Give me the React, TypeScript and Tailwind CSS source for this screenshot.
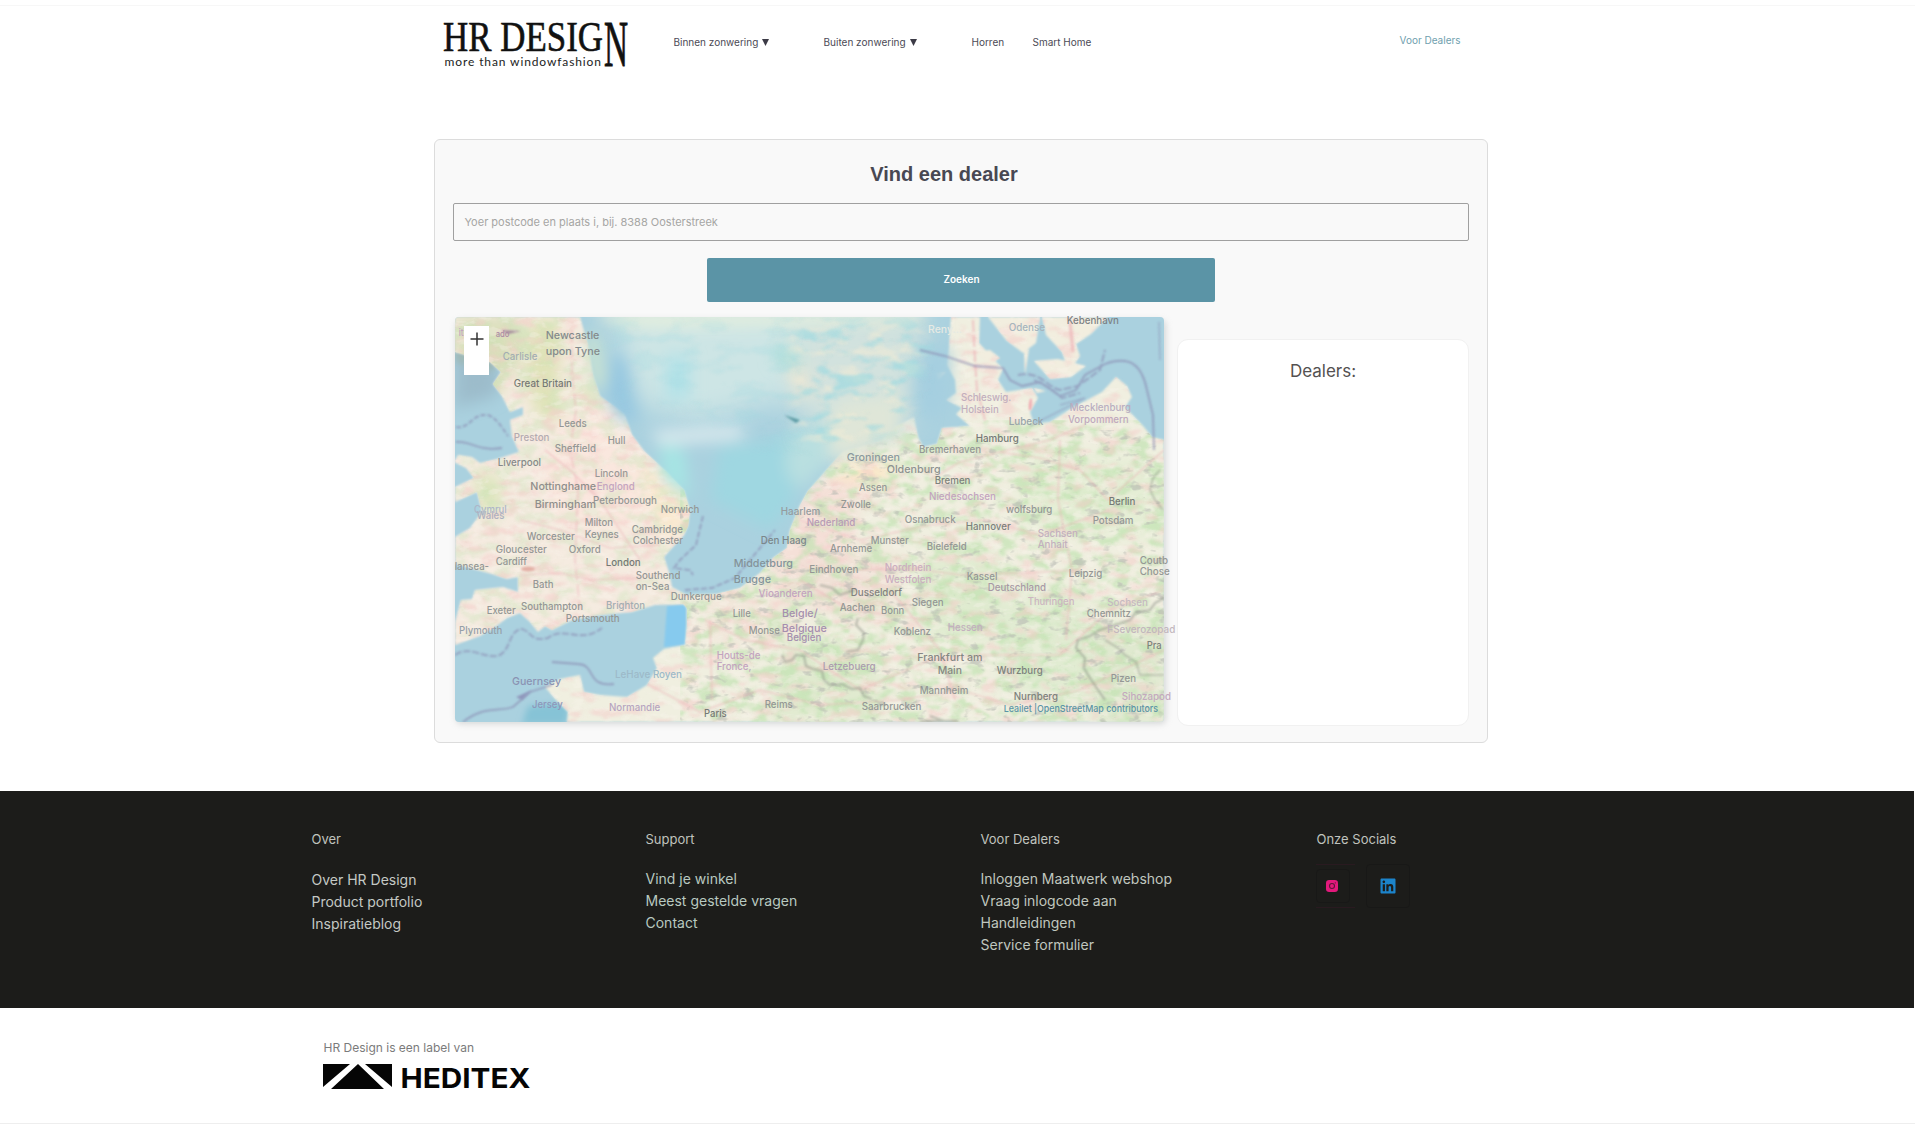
import React from "react";
import { RiLinkedinBoxFill } from "react-icons/ri";

type Label = [string, number, number, number, string?, number?];

const DARK = "#757975";
const PINK = "#c3a4bf";
const PALE = "#a3adb2";
const MAUVE = "#a58fae";

// text, x, baseline, width, colour, size
const labels: Label[] = [
  ["iti", 458.7, 335.7, 7, PINK],
  ["ado", 495.7, 336.7, 13.7, "#ab8ba5", 9],
  ["Newcastle", 545.7, 339, 53.7, "#848a8c", 11],
  ["upon Tyne", 545.7, 355, 54.3, "#848a8c", 11],
  ["Carlisle", 502.7, 360, 34.7, PALE],
  ["Great Britain", 513.7, 387, 58.3, DARK],
  ["Leeds", 558.7, 427, 28],
  ["Preston", 513.7, 441, 35.7, "#b3abb0"],
  ["Hull", 607.7, 444, 17.7],
  ["Sheffield", 554.7, 452, 41.3],
  ["Liverpool", 497.7, 466, 43.3, "#858989"],
  ["Lincoln", 594.7, 477, 33.3, "#9a9896"],
  ["Nottinghame", 530.3, 490, 65.7, "#8f8e8b", 11],
  ["Englond", 596.7, 490, 38, PINK],
  ["Birmingham", 534.7, 508, 61.3, "#8f8e8b", 11],
  ["Peterborough", 593, 504, 64],
  ["Norwich", 660.7, 513, 38.7],
  ["Cymrul", 474, 513, 32.7, "#adb6c8"],
  ["Wales", 476.7, 519.3, 27.7, "#adb0c0"],
  ["Haarlem", 780.8, 515.3, 39.4, "#959c9f"],
  ["Milton", 584.7, 526, 28.3],
  ["Keynes", 584.7, 538, 34],
  ["Cambridge", 631.7, 533, 51.3],
  ["Colchester", 632.7, 544, 50.3],
  ["Worcester", 526.7, 540, 48],
  ["Gloucester", 495.7, 553, 51],
  ["Oxford", 568.7, 553, 32],
  ["Cardiff", 495.7, 565, 31.3],
  ["London", 605.7, 566.3, 35, DARK],
  ["lansea-", 454.7, 570, 34.3],
  ["Bath", 532.7, 588, 20.7],
  ["Southend", 635.7, 579, 44.7],
  ["on-Sea", 635.7, 590, 33.7],
  ["Dunkerque", 670.7, 600, 51],
  ["Den Haag", 760.7, 544, 46, "#7b878b"],
  ["Middetburg", 733.7, 567.3, 59.3, "#84939a", 11],
  ["Brugge", 733.7, 583, 37.3, "#84939a", 11],
  ["Exeter", 486.7, 614, 29],
  ["Southampton", 521, 610, 62],
  ["Brighton", 606, 609, 39, PALE],
  ["Portsmouth", 565.7, 622, 54],
  ["Plymouth", 459, 634, 43.3, "#959fa8"],
  ["Lille", 732.7, 617, 18],
  ["Monse", 748.7, 634, 31.3],
  ["Vioanderen", 758.6, 597, 54, PINK],
  ["Belgle/", 782, 617, 35.6, MAUVE, 11],
  ["Belgique", 781.8, 632, 45, MAUVE, 11],
  ["Belgien", 786.8, 641, 34.5, MAUVE],
  ["Houts-de", 716.7, 659, 43.7, PINK],
  ["Fronce,", 716.7, 670, 34.7, PINK],
  ["Guernsey", 512, 685, 49, "#8a93b3", 11],
  ["LeHave Royen", 615, 678, 67, "#9dbac9"],
  ["Jersey", 532, 708.3, 30.7, "#8f97ba"],
  ["Normandie", 609, 711, 51.3, "#b7a5c0"],
  ["Paris", 704, 717, 22.7, DARK],
  ["Reims", 764.7, 708, 28],
  ["Reny...", 928, 332.7, 34, "#e6eae4"],
  ["Odense", 1008.7, 331, 36.3, "#a6b4bd"],
  ["Kebenhavn", 1066.7, 324, 52.3, "#7c8183"],
  ["Schleswig.", 961, 401, 50.3, "#c2aebd"],
  ["Holstein", 961, 413, 37.7, "#c2aebd"],
  ["Mecklenburg", 1069.7, 411, 61.3, "#b9adc0"],
  ["Vorpommern", 1068, 423, 60.7, "#c0a9be"],
  ["Lubeck", 1008.7, 425, 34.7, "#98a4a9"],
  ["Hamburg", 975.7, 442, 43, DARK],
  ["Bremerhaven", 919, 453, 62],
  ["Groningen", 846.7, 461, 53.3, "#8c999e", 11],
  ["Oldenburg", 886.7, 473, 54, "#8d9290", 11],
  ["Bremen", 934.7, 484, 35.7, "#7d817c"],
  ["Assen", 859, 491, 28.3],
  ["Niedesochsen", 929, 500, 67, PINK],
  ["Zwolle", 840.7, 508, 30.3],
  ["wolfsburg", 1006, 513, 46.3],
  ["Berlin", 1108.7, 505, 26.7, DARK],
  ["Osnabruck", 904.7, 523, 51],
  ["Potsdam", 1092.7, 524, 40.7],
  ["Nederland", 806.7, 526, 48.7, "#b79cb6"],
  ["Hannover", 965.7, 530, 45, "#7d817c"],
  ["Munster", 870.7, 544, 38],
  ["Arnheme", 830, 552, 42.3],
  ["Bielefeld", 926.7, 550, 40],
  ["Sachsen", 1037.7, 537, 40.3, "#c3b0be"],
  ["Anhait", 1037.7, 548, 30, "#c3b0be"],
  ["Coutb", 1139.7, 564, 28.3],
  ["Chose", 1139.7, 575, 30],
  ["Eindhoven", 809.3, 573, 49],
  ["Nordrhein", 884.7, 571, 46.7, "#cbaebf"],
  ["Westfolen", 884.7, 583, 46.7, "#cbaebf"],
  ["Kassel", 966.7, 580, 30.7],
  ["Leipzig", 1068.7, 577, 33.7],
  ["Deutschland", 987.7, 591, 58.3, "#a899a5"],
  ["Dusseldorf", 850.7, 596, 51.3, "#82827f"],
  ["Siegen", 911.7, 606, 32],
  ["Thuringen", 1027.7, 605, 46.7, "#ccb5c0"],
  ["Aachen", 839.7, 611, 35.3],
  ["Bonn", 881, 614, 23.3],
  ["Sochsen", 1107.3, 606, 40.7, "#c6b9c0"],
  ["Chemnitz", 1086.7, 617, 44.3],
  ["FSeverozopad", 1107.3, 633, 68, "#c2b7bd"],
  ["Koblenz", 893.7, 635, 37.3],
  ["Hessen", 947.7, 631, 35, "#c3b0be"],
  ["Pra", 1146.7, 649, 15, "#7d817c"],
  ["Frankfurt am", 917.3, 661, 65.3, "#868783", 11],
  ["Main", 937.7, 674, 24.3, "#868783", 11],
  ["Letzebuerg", 822.7, 670, 53, "#ac9cae"],
  ["Wurzburg", 996.7, 674, 46, "#7d817c"],
  ["Pizen", 1110.7, 682, 25.3],
  ["Mannheim", 919.7, 694, 48.7],
  ["Nurnberg", 1013.7, 700, 44.3, "#7d817c"],
  ["Sihozapod", 1121.7, 700, 49.3, "#c3a9be"],
  ["Saarbrucken", 861.7, 710, 59.7],
];

const BRITAIN =
  "M455 317H580L588 345L593 375L600 396L618 409L625 415L632 435L645 452L668 473L684 490L690 510L688 526L684 535L672 548L664 557L669 572L672 587L690 597L686 604L655 605L632 612L600 615L572 620L552 630L545 626L538 632L530 622L520 613L507 618L495 627L480 636L455 645V622L461 600L472 599L475 590L503 587L518 592V577L507 579L492 574L455 564V537L470 528L482 512L477 492L455 502V487L474 478L466 468L454 462L458 455L472 457L480 463L497 459L519 452L512 436L510 420L523 415L523 407L510 412L502 396L493 384L501 372L490 362L455 352Z";
const CONTINENT =
  "M567 722L568 712L556 700L545 687L560 679L580 675L584 692L600 695L627 697L647 685L657 668L653 658L664 649L685 645L687 625V608L670 590L683 595L717 594L740 588L760 573L773 558L787 548L790 530L800 505L808 491L829 467L843 451L881 441L895 427L914 417L918 437L923 447L937 444L942 428L970 426L956 414L962 408L946 400L956 393L955 380L947 365L949 347L951 317H980L979 343L1003 369L998 380L1006 392L1032 388L1038 398L1030 412L1034 424L1050 422L1069 410L1087 400L1102 392L1116 377L1127 386L1132 397L1125 407L1144 427L1152 437L1164 440V722Z";
const ISLANDS =
  "M988 317H1040L1036 343L1023 353L1006 340ZM1042 317H1108L1091 334L1076 344L1080 356L1069 372L1062 352L1046 335ZM1034 361L1058 359L1086 366L1071 377L1050 379ZM975 352L990 350L1000 358L990 364ZM1024 352L1029 349L1025 375ZM1034 388L1046 391L1037 393ZM935 373L946 372L938 380Z";

function MapCanvas() {
  return (
    <svg className="absolute inset-0 size-full overflow-visible" viewBox="455 317 709 405">
      <defs>
        <clipPath id="frame">
          <rect x="455" y="317" width="709" height="405" rx="4" />
        </clipPath>
        <clipPath id="land">
          <path d={BRITAIN} />
          <path d={CONTINENT} />
          <path d={ISLANDS} />
        </clipPath>
        <filter id="soft1" x="-20%" y="-20%" width="140%" height="140%">
          <feGaussianBlur stdDeviation="1.3" />
        </filter>
        <filter id="soft3" x="-20%" y="-20%" width="140%" height="140%">
          <feGaussianBlur stdDeviation="3" />
        </filter>
        <filter id="soft8" x="-50%" y="-50%" width="200%" height="200%">
          <feGaussianBlur stdDeviation="8" />
        </filter>
        <filter id="soft14" x="-60%" y="-60%" width="220%" height="220%">
          <feGaussianBlur stdDeviation="14" />
        </filter>
        <filter id="greens" x="0" y="0" width="100%" height="100%" colorInterpolationFilters="sRGB">
          <feTurbulence type="fractalNoise" baseFrequency="0.06 0.09" numOctaves="3" seed="7" />
          <feColorMatrix values="0 0 0 0 0.76  0 0 0 0 0.89  0 0 0 0 0.70  6 0 0 0 -2.8" />
          <feGaussianBlur stdDeviation="0.8" />
        </filter>
        <filter id="pinks" x="0" y="0" width="100%" height="100%" colorInterpolationFilters="sRGB">
          <feTurbulence type="fractalNoise" baseFrequency="0.05 0.11" numOctaves="3" seed="21" />
          <feColorMatrix values="0 0 0 0 0.96  0 0 0 0 0.80  0 0 0 0 0.79  0 6 0 0 -3.2" />
          <feGaussianBlur stdDeviation="0.8" />
        </filter>
        <filter id="whites" x="0" y="0" width="100%" height="100%" colorInterpolationFilters="sRGB">
          <feTurbulence type="fractalNoise" baseFrequency="0.07 0.14" numOctaves="3" seed="33" />
          <feColorMatrix values="0 0 0 0 0.98  0 0 0 0 0.96  0 0 0 0 0.93  0 6 0 0 -3.1" />
          <feGaussianBlur stdDeviation="0.6" />
        </filter>
        <filter id="greys" x="0" y="0" width="100%" height="100%" colorInterpolationFilters="sRGB">
          <feTurbulence type="fractalNoise" baseFrequency="0.07 0.12" numOctaves="3" seed="4" />
          <feColorMatrix values="0 0 0 0 0.72  0 0 0 0 0.73  0 0 0 0 0.70  0 0 6 0 -3.7" />
          <feGaussianBlur stdDeviation="0.6" />
        </filter>
        <filter id="aquas" x="0" y="0" width="100%" height="100%" colorInterpolationFilters="sRGB">
          <feTurbulence type="fractalNoise" baseFrequency="0.03 0.07" numOctaves="4" seed="11" />
          <feColorMatrix values="0 0 0 0 0.60  0 0 0 0 0.85  0 0 0 0 0.88  0 6 0 0 -3" />
          <feGaussianBlur stdDeviation="1.2" />
        </filter>
        <filter id="creams" x="0" y="0" width="100%" height="100%" colorInterpolationFilters="sRGB">
          <feTurbulence type="fractalNoise" baseFrequency="0.03 0.07" numOctaves="4" seed="18" />
          <feColorMatrix values="0 0 0 0 0.94  0 0 0 0 0.92  0 0 0 0 0.84  6 0 0 0 -3.1" />
          <feGaussianBlur stdDeviation="1.2" />
        </filter>
        <mask id="seaMask">
          <path d="M600 317H925L935 345L905 425L845 450L790 450L700 415L630 400Z" fill="#fff" filter="url(#soft8)" />
        </mask>
        <mask id="eastSeaMask">
          <path d="M790 325H920L930 345L900 425L845 450L800 440Z" fill="#fff" filter="url(#soft8)" />
        </mask>
      </defs>

      <rect x="456" y="320" width="710" height="404" rx="5" fill="#b9bdbd" opacity="0.55" filter="url(#soft3)" />
      <g clipPath="url(#frame)">
        <rect x="455" y="317" width="709" height="405" fill="#aad1df" />

        <path d="M455 350L492 360L502 384L493 398L470 403L455 410Z" fill="#9cbccb" filter="url(#soft8)" />
        <path d="M455 338L490 345L502 362L490 372L455 362Z" fill="#9fb9b8" filter="url(#soft3)" />
        <path d="M528 706L570 702L566 724H522Z" fill="#86c3d6" filter="url(#soft3)" />
        <path d="M667 606L686 604V645L664 647Z" fill="#86caee" filter="url(#soft1)" />

        <g filter="url(#soft1)">
          <path d={BRITAIN} fill="#f5ebe0" />
          <path d={CONTINENT} fill="#f0efe0" />
          <path d={ISLANDS} fill="#f2eedf" />
        </g>
        <g clipPath="url(#land)">
          <g filter="url(#soft8)">
            <path d="M455 317H520L525 350L495 400H455Z" fill="#dadfbb" />
            <path d="M530 320H562L558 400L535 410L525 380Z" fill="#dfe3b8" />
            <path d="M580 385L608 395L606 402L575 400Z" fill="#d7e2b4" />
            <path d="M533 402L562 400L560 420L540 418Z" fill="#dbe3b4" />
            <path d="M474 470L502 478L500 510L480 518Z" fill="#dbe5bb" />
            <path d="M560 420L600 410L640 470L650 530L560 520L540 480Z" fill="#fae7de" />
            <path d="M640 460L690 490V520L665 545L650 500Z" fill="#fae9cf" />
            <path d="M830 460L895 460L885 485L835 487Z" fill="#fbe8c8" />
            <path d="M800 480L860 480L850 560L790 590L770 570Z" fill="#f5e0d8" />
            <path d="M700 590L800 580L790 650L700 640Z" fill="#f2e8db" />
            <path d="M800 560L900 555L890 620L800 610Z" fill="#f0e1d6" />
            <path d="M920 560L1000 555V640L930 640Z" fill="#dfebcf" />
            <path d="M1000 600L1080 590L1100 700L1000 690Z" fill="#e1ecd2" />
            <path d="M1010 450L1164 460V540L1030 530Z" fill="#e5eed5" />
            <path d="M780 640L880 640V722H770Z" fill="#e0eacf" />
            <path d="M1085 625L1164 625V722H1090Z" fill="#dfe9cf" />
          </g>
          <rect x="680" y="420" width="484" height="302" filter="url(#greens)" opacity="0.7" />
          <rect x="455" y="317" width="240" height="320" filter="url(#greens)" opacity="0.3" />
          <rect x="455" y="317" width="709" height="405" filter="url(#pinks)" opacity="0.5" />
          <rect x="455" y="317" width="709" height="405" filter="url(#whites)" opacity="0.3" />
          <rect x="680" y="430" width="484" height="292" filter="url(#greys)" opacity="0.6" />
          <g fill="none" stroke="#ecaeb4" strokeWidth="1.2" opacity="0.65" filter="url(#soft1)">
            <path d="M572 330V375L576 410L570 450L578 490L575 560L580 610" strokeDasharray="12 4" />
            <path d="M520 575L560 573L590 580L640 578M545 450L570 470L600 500L640 560M520 520L560 530L610 548L660 545" />
            <path d="M973 320L975 360L977 390L985 420" strokeDasharray="12 3" strokeWidth="2" />
            <path d="M1070 322L1073 352" strokeWidth="3" />
            <path d="M930 480L960 462L1000 452L1050 440L1085 425M998 452L1040 458L1080 470L1108 500L1164 450" />
            <path d="M800 520L860 540L930 525L985 520L1040 535L1110 510M850 570L910 568L960 575L1040 572L1080 570" />
            <path d="M705 620L745 640L800 650L860 690L930 660L980 655L1060 655L1110 610L1164 590" />
            <path d="M640 680L700 712L760 690L820 705L900 700L960 690L1010 705L1080 690L1164 650" />
            <path d="M710 620L712 700M890 590L940 650L955 700M1060 440L1058 500L1072 570L1066 640M800 580L850 610L930 620" />
          </g>
          <g fill="none" stroke="#8e9488" strokeWidth="2.2" opacity="0.55" filter="url(#soft1)">
            <path d="M782 655L785 662L792 660L796 655L804 656L806 666L813 669L822 671L824 680L830 685L842 684L852 689L860 688L864 696L872 699" />
            <path d="M858 618L856 625L864 633L863 640L858 650L846 652" />
            <path d="M1164 598L1155 603L1150 610L1136 612L1130 620L1112 626L1100 630L1090 636L1078 640L1076 648L1085 658L1084 668L1090 678L1098 690L1105 700" />
            <path d="M920 721H958M930 716L944 721" />
            <path d="M1163 510L1155 500L1150 490L1153 478L1160 470M1105 640L1118 648L1125 655L1136 662L1140 675H1164" strokeWidth="1.6" />
            <path d="M820 585L832 588L840 595L855 590" />
          </g>
        </g>

        {/* haze across the North Sea */}
        <g filter="url(#soft14)">
          <path d="M630 310H850L860 360L800 395L700 420L640 405L618 350Z" fill="#cde5e5" />
          <path d="M790 317H925L910 425L840 450L795 410Z" fill="#d2e2de" />
        </g>
        <g filter="url(#soft8)">
          <path d="M590 312H925L920 323L620 327Z" fill="#ebf2de" />
          <path d="M585 335L598 335L606 380L596 395Z" fill="#cfe6cf" />
          <path d="M665 355H690V400H665Z" fill="#b3e2e8" />
          <path d="M660 440L684 450L690 500L664 478Z" fill="#a6e6e4" />
          <path d="M612 350L626 360L632 400L640 420L620 420L606 390Z" fill="#95c7e1" />
          <path d="M720 445L790 440L795 500L770 530L710 500Z" fill="#9fd7e1" />
          <path d="M650 432L740 426L745 438L660 444Z" fill="#e0ecef" />
          <path d="M787 365H806L815 395L797 398Z" fill="#e6e5d6" />
          <path d="M775 345L802 355L795 368L775 362Z" fill="#a9dfda" />
          <path d="M840 400L900 395L900 440L835 460L805 465L820 430Z" fill="#dfe6d8" />
          <path d="M790 430L830 420L830 460L800 490L785 470Z" fill="#b9dfe0" />
          <path d="M930 345L950 350L947 410L920 425L915 380Z" fill="#a5cfe0" />
        </g>
        <g mask="url(#seaMask)">
          <rect x="583" y="317" width="352" height="150" filter="url(#aquas)" opacity="0.2" />
        </g>
        <g mask="url(#eastSeaMask)">
          <rect x="760" y="317" width="180" height="150" filter="url(#creams)" opacity="0.6" />
          <rect x="760" y="317" width="180" height="150" filter="url(#aquas)" opacity="0.55" />
        </g>

        {/* maritime borders */}
        <g fill="none" stroke="#8b8cb2" strokeWidth="1.8" opacity="0.72" filter="url(#soft1)">
          <path d="M456 427C468 430 472 415 484 415C492 413 500 424 508 436" strokeDasharray="5 2" />
          <path d="M456 442C470 440 478 452 502 448" />
          <path d="M455 655C470 645 482 658 498 656C512 650 508 630 522 629C532 632 530 642 548 638C565 625 580 645 602 628" strokeDasharray="7 2" />
          <path d="M552 662L578 664C596 664 586 688 614 684" />
          <path d="M463 722C485 705 500 712 513 707L530 692L552 685" />
          <path d="M703 516L696 545L680 560L674 568L690 570L693 575M685 590L712 588L735 578L775 530" strokeDasharray="6 2" />
          <path d="M920 350L945 356L975 366L1003 368L1010 380L1022 386L1040 382L1060 396L1076 390L1085 375L1105 364C1130 355 1142 365 1147 390L1153 415L1154 450" />
          <path d="M1018 375C1040 370 1048 388 1060 390L1078 386L1100 370L1105 350M1034 380L1050 388L1062 398L1080 393" strokeDasharray="8 2" />
          <path d="M1159 322L1160 360M1060 405L1085 398L1030 426" strokeWidth="1" />
        </g>
        <g filter="url(#soft1)">
          <path d="M784 415L800 420L796 423Z" fill="#5f9ca5" />
          <path d="M516 697L532 690L522 700Z" fill="#8f96bb" />
          <ellipse cx="528" cy="569" rx="7" ry="2.5" fill="#e3b0a6" />
          <path d="M1030 405L1031 399L1030 410Z" fill="#f0a1ab" stroke="#f0a1ab" strokeWidth="2" />
          <path d="M501 330L521 331L508 334Z" fill="#a58b9c" />
        </g>
      </g>

      <g fontFamily="Inter, sans-serif" fontWeight="500">
        {labels.map(([text, x, y, width, color = "#949795", size = 10]) => (
          <text key={text + x} x={x} y={y} textLength={width} lengthAdjust="spacingAndGlyphs" fill={color} fontSize={size}>
            {text}
          </text>
        ))}
        <text x="1003.7" y="712" textLength="154.3" lengthAdjust="spacingAndGlyphs" fill="#5b94a6" fontSize="9.5">
          Leailet |OpenStreetMap contributors
        </text>
      </g>
    </svg>
  );
}

function BrandLogo() {
  return (
    <svg className="h-[50px] w-[188px] overflow-visible" viewBox="441 19 188 50" fontFamily="'Liberation Serif', serif" fill="#111">
      <text x="443" y="50.5" fontSize="43" textLength="160" lengthAdjust="spacingAndGlyphs" stroke="#111" strokeWidth="0.6">
        HR DESIG
      </text>
      <text x="604" y="65.7" fontSize="66" textLength="24" lengthAdjust="spacingAndGlyphs" stroke="#111" strokeWidth="1">
        N
      </text>
      <text x="444.5" y="65.5" fontSize="12" fontFamily="Lato, sans-serif" textLength="156.5" lengthAdjust="spacing" fill="#222">
        more than windowfashion
      </text>
    </svg>
  );
}

function Arrow() {
  return (
    <svg className="ml-1 h-[7px] w-[7px]" viewBox="0 0 7 7">
      <path d="M0 0H7L3.5 7Z" fill="#3c3b46" />
    </svg>
  );
}

function InstagramMark() {
  return (
    <svg className="-ml-px size-3" viewBox="0 0 12 12">
      <rect width="12" height="12" rx="3.2" fill="#e3197c" />
      <circle cx="6" cy="6" r="2.5" fill="none" stroke="#5a1637" strokeWidth="1.1" />
      <circle cx="9.3" cy="2.8" r="0.6" fill="#5a1637" />
    </svg>
  );
}

const columns = [
  { title: "Over", links: ["Over HR Design", "Product portfolio", "Inspiratieblog"], cls: "w-[334px]", list: "mt-[21px] text-[#c4c9c5]" },
  { title: "Support", links: ["Vind je winkel", "Meest gestelde vragen", "Contact"], cls: "w-[335px]", list: "mt-5 text-[#b8c9c0]" },
  { title: "Voor Dealers", links: ["Inloggen Maatwerk webshop", "Vraag inlogcode aan", "Handleidingen", "Service formulier"], cls: "w-[336px]", list: "mt-5 text-[#c0c7bf]" },
];

export default function App() {
  return (
    <div className="flex h-[1124px] w-[1915px] flex-col overflow-hidden bg-white pt-[5px] font-['Inter',sans-serif]">
      <header className="flex h-[134px] items-start border-t border-[#f7f7f7] pl-[441px] text-[10px] leading-[14px] text-[#4b4a55]">
        <div className="mt-[13px]">
          <BrandLogo />
        </div>
        <nav className="mt-[29px] ml-[44.5px] flex">
          <a className="flex w-[150px] items-center">Binnen zonwering<Arrow /></a>
          <a className="flex w-[148px] items-center">Buiten zonwering<Arrow /></a>
          <a className="w-[61px]">Horren</a>
          <a className="w-[367px]">Smart Home</a>
        </nav>
        <a className="mt-[27px] text-[#6fa0ae]">Voor Dealers</a>
      </header>

      <main className="ml-[434px] flex h-[604px] w-[1054px] shrink-0 flex-col items-center rounded-md border border-[#dcdcdc] bg-[#f9f9f9] px-[17px]">
        <h1 className="mt-[22px] mr-[34px] font-['Liberation_Sans',sans-serif] text-[20px] leading-6 font-bold text-[#484853]">Vind een dealer</h1>
        <div className="mt-[17px] mr-px flex h-[38px] w-[1016px] items-center rounded-[2px] border border-[#a0a0a0] pt-px pl-[11px] text-[11px] text-[#a6a6a4]">
          Yoer postcode en plaats i, bij. 8388 Oosterstreek
        </div>
        <button className="mt-[17px] h-[44px] w-[508px] rounded-[2px] bg-[#5b94a6] pb-px pl-px text-[10px] font-semibold text-white">Zoeken</button>
        <div className="mt-[15px] flex w-full items-start">
          <div className="relative ml-[3px] h-[405px] w-[709px] shrink-0">
            <MapCanvas />
            <div className="absolute top-[9px] left-[9px] flex h-[49px] w-[25px] justify-center bg-white pt-[6px]">
              <svg className="ml-px h-[14px] w-[14px]" viewBox="0 0 14 14">
                <path d="M7 0.5V13.5M0.5 7H13.5" stroke="#333" strokeWidth="1.5" />
              </svg>
            </div>
          </div>
          <aside className="mt-[22px] ml-[13px] h-[387px] w-[292px] shrink-0 rounded-[11px] border border-[#f1f1f1] bg-white pt-5 text-center text-[17px] leading-[22px] text-[#545151]">
            Dealers:
          </aside>
        </div>
      </main>

      <footer className="mt-[48px] flex h-[217px] w-[1914px] shrink-0 bg-[#1c1c1a] pt-[39px] pl-[311.5px]">
        {columns.map((c) => (
          <div key={c.title} className={c.cls}>
            <h2 className="text-[13px] leading-[18px] text-[#c0c3be]">{c.title}</h2>
            <ul className={c.list + " text-[14px] leading-[22px]"}>
              {c.links.map((l) => (
                <li key={l}>{l}</li>
              ))}
            </ul>
          </div>
        ))}
        <div>
          <h2 className="text-[13px] leading-[18px] text-[#c0c3be]">Onze Socials</h2>
          <div className="mt-4 -ml-px flex gap-[11px]">
            <div className="flex h-[44px] w-[39px] items-center border-y border-[#291a20]">
              <div className="flex size-[34px] items-center justify-center rounded border border-[#181817]">
                <InstagramMark />
              </div>
            </div>
            <div className="flex size-[44px] items-center justify-center rounded border border-[#181817]">
              <RiLinkedinBoxFill className="size-[20px] text-[#1c84cb]" />
            </div>
          </div>
        </div>
      </footer>

      <section className="flex h-[116px] flex-col border-b border-[#eeeeee] pt-8 pl-[323px]">
        <p className="pl-[0.5px] text-[12px] leading-4 text-[#7b7b7b]">HR Design is een label van</p>
        <div className="mt-2 flex items-center">
          <svg className="h-[26px] w-[69px]" viewBox="0 0 69 26">
            <path d="M0 0H27L0 23ZM35 0L61 25H8ZM42 0H69V23Z" fill="#050505" />
          </svg>
          <svg className="ml-[8px] h-[26px] w-[132px] overflow-visible" viewBox="0 0 132 26">
            <text x="0.5" y="23.5" fontFamily="Inter, sans-serif" fontWeight="700" fontSize="27.5" textLength="130" lengthAdjust="spacingAndGlyphs" fill="#050505">
              HEDITEX
            </text>
          </svg>
        </div>
      </section>
    </div>
  );
}
